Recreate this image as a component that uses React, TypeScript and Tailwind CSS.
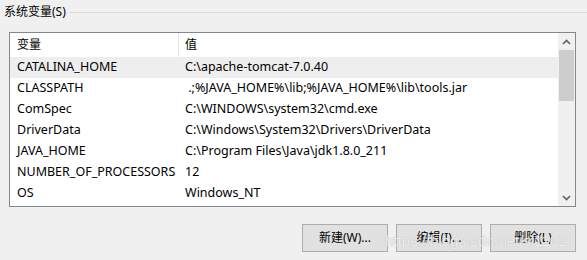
import React from "react";

const rows: [string, string][] = [
  ["CATALINA_HOME", "C:\\apache-tomcat-7.0.40"],
  ["CLASSPATH", " .;%JAVA_HOME%\\lib;%JAVA_HOME%\\lib\\tools.jar"],
  ["ComSpec", "C:\\WINDOWS\\system32\\cmd.exe"],
  ["DriverData", "C:\\Windows\\System32\\Drivers\\DriverData"],
  ["JAVA_HOME", "C:\\Program Files\\Java\\jdk1.8.0_211"],
  ["NUMBER_OF_PROCESSORS", "12"],
  ["OS", "Windows_NT"],
];

const Chevron = ({ up }: { up?: boolean }) => (
  <svg width="9" height="6" viewBox="0 0 9 6" className="block">
    <path
      d={up ? "M1 5 L4.5 1.5 L8 5" : "M1 1 L4.5 4.5 L8 1"}
      fill="none"
      stroke="#606060"
      strokeWidth="1.6"
    />
  </svg>
);

const WinButton = ({ label }: { label: string }) => (
  <button className="w-[86px] h-[28px] border border-[#adadad] bg-[#e1e1e1] text-[12px] text-black flex items-center justify-center">
    {label}
  </button>
);

export default function App() {
  return (
    <div
      className="relative w-[587px] h-[260px] bg-[#f0f0f0] text-[12px] text-black overflow-hidden"
      style={{ fontFamily: '"Noto Sans", "Noto Sans CJK SC", sans-serif' }}
    >
      {/* Group header */}
      <div className="flex items-center h-[24px] pl-[4px]">
        <span className="leading-none">系统变量(S)</span>
        <div className="flex-1 h-px bg-[#dcdcdc] ml-[3px]" />
      </div>

      {/* List view */}
      <div className="ml-[9px] mt-[8px] w-[567px] h-[175px] border border-[#828790] bg-white flex text-[12.5px]">
        <div className="flex-1 flex flex-col">
          <div className="flex h-[24px] items-center text-[12px]">
            <div className="w-[169px] h-full flex items-center pl-[7px] border-r border-[#e5e5e5]">
              变量
            </div>
            <div className="pl-[6px]">值</div>
          </div>
          {rows.map(([name, value], i) => (
            <div
              key={name}
              className={`flex h-[21px] items-center ${i === 0 ? "bg-[#eeeeee]" : ""}`}
            >
              <div className="w-[170px] pl-[7px] whitespace-nowrap">{name}</div>
              <div className="pl-[5px] whitespace-pre">{value}</div>
            </div>
          ))}
        </div>
        {/* Scrollbar */}
        <div className="w-[17px] bg-[#f0f0f0] flex flex-col items-center">
          <div className="h-[17px] flex items-center justify-center">
            <Chevron up />
          </div>
          <div className="w-[15px] h-[51px] bg-[#cdcdcd]" />
          <div className="flex-1" />
          <div className="h-[17px] flex items-center justify-center">
            <Chevron />
          </div>
        </div>
      </div>

      {/* Buttons */}
      <div className="flex justify-end gap-[8px] pr-[11px] mt-[17px]">
        <WinButton label="新建(W)..." />
        <WinButton label="编辑(I)..." />
        <WinButton label="删除(L)" />
      </div>

      {/* Watermark */}
      <div
        className="absolute left-[385px] top-[230px] text-[15px] text-white/80 whitespace-nowrap pointer-events-none [text-shadow:0_0_1px_#a0a0a0]"
        style={{ fontFamily: '"Liberation Sans", sans-serif' }}
      >
        https://blog.csdn.net/sl1102
      </div>
    </div>
  );
}
